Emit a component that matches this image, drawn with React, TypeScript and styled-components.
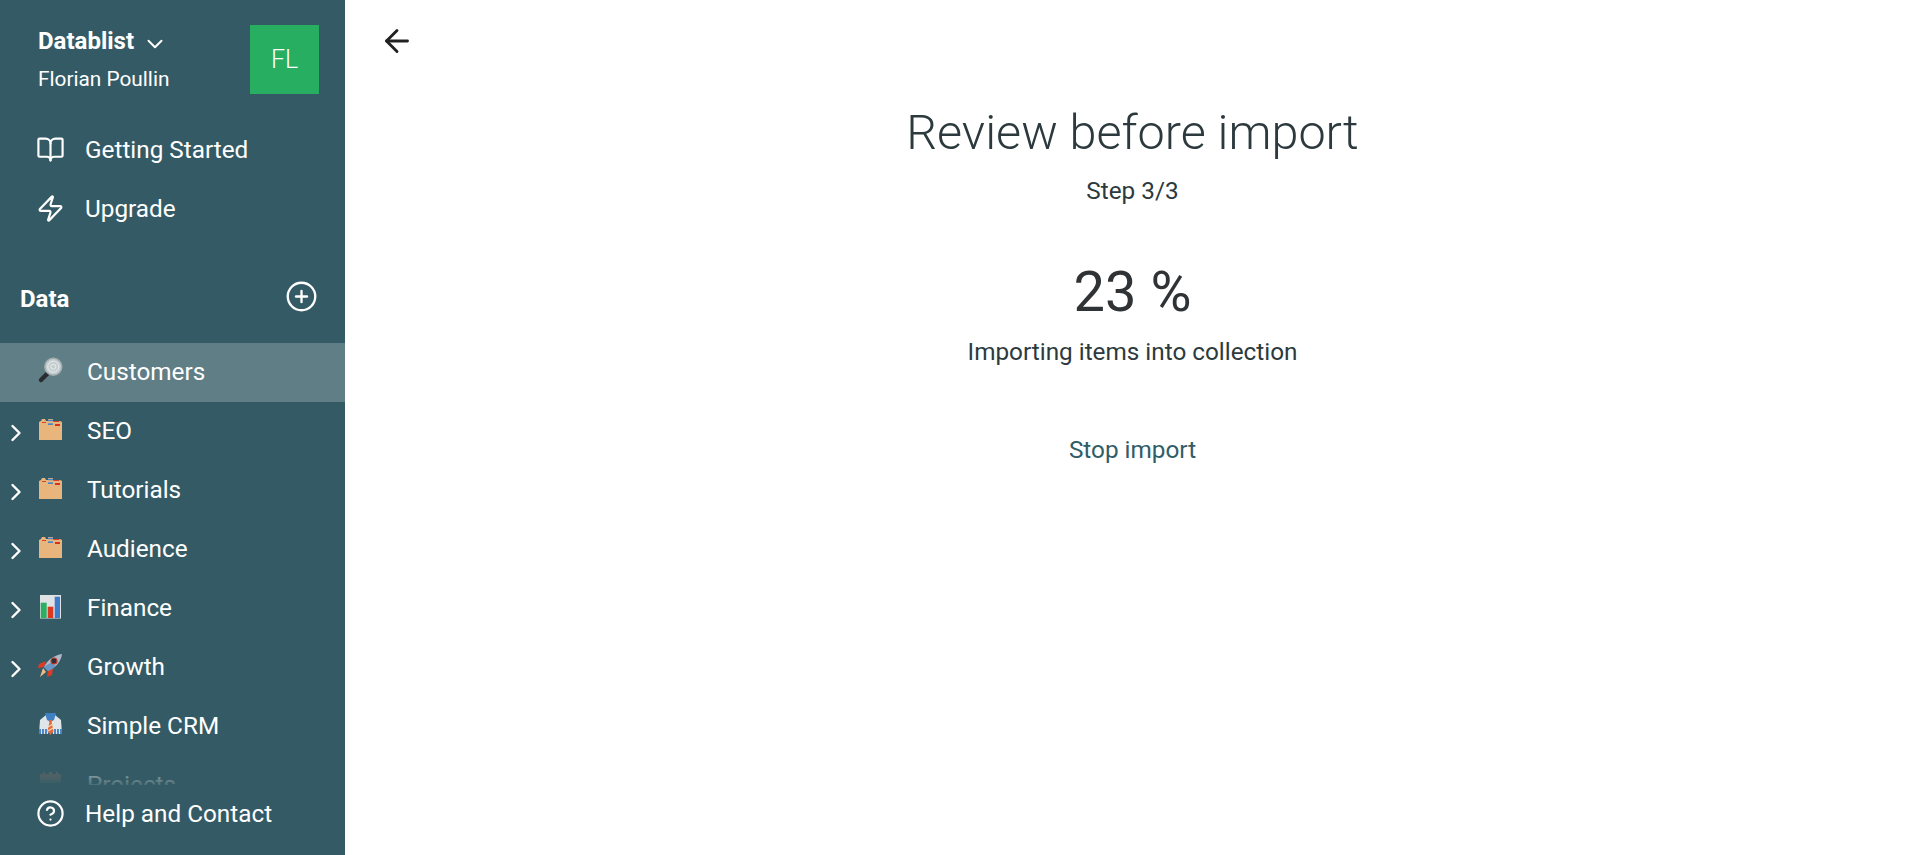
import React from "react";
import styled, { createGlobalStyle } from "styled-components";
import { ArrowLeft, BookOpen, ChevronDown, ChevronRight, CircleHelp, CirclePlus, Zap } from "lucide-react";

const GlobalStyle = createGlobalStyle`
  html, body {
    margin: 0;
    padding: 0;
    background: #fff;
    font-family: Roboto, "Liberation Sans", sans-serif;
  }
  * {
    box-sizing: border-box;
  }
`;

const Page = styled.div`
  display: flex;
  width: 100%;
  height: 855px;
  overflow: hidden;
`;

const Sidebar = styled.aside`
  display: flex;
  flex-direction: column;
  flex: 0 0 345px;
  height: 100%;
  background: #345b65;
  color: #fff;
`;

const Header = styled.div`
  display: flex;
  justify-content: space-between;
  padding: 25px 26px 0 38px;
  height: 120px;
`;

const Account = styled.div`
  display: flex;
  flex-direction: column;
  margin-top: -1px;
`;

const AccountName = styled.div`
  display: flex;
  align-items: center;
  gap: 8px;
  font-size: 24px;
  font-weight: 700;
  line-height: 32px;
`;

const AccountCaret = styled(ChevronDown)`
  margin-top: 7px;
`;

const UserName = styled.div`
  margin-top: 8px;
  font-size: 20.8px;
  font-weight: 400;
  line-height: 28px;
`;

const Avatar = styled.div`
  display: flex;
  align-items: center;
  justify-content: center;
  width: 69px;
  height: 69px;
  background: #27ae60;
  font-size: 25px;
  font-weight: 300;
`;

const NavRow = styled.div`
  display: flex;
  align-items: center;
  gap: 20px;
  height: 59px;
  padding-left: 36px;
  font-size: 24.3px;
`;

const SectionHead = styled.div`
  display: flex;
  align-items: center;
  justify-content: space-between;
  height: 59px;
  margin-top: 30px;
  padding: 2px 27px 0 20px;
  font-size: 24px;
  font-weight: 700;
`;

const AddIcon = styled(CirclePlus)`
  margin-top: -4px;
`;

const List = styled.div`
  position: relative;
  flex: 1;
  min-height: 0;
  margin-top: 16px;
  overflow: hidden;

  &::after {
    content: "";
    position: absolute;
    left: 0;
    right: 0;
    bottom: 0;
    height: 34px;
    background: linear-gradient(rgba(52, 91, 101, 0), rgba(52, 91, 101, 0.88));
  }
`;

const ListRow = styled.div<{ $active?: boolean }>`
  display: flex;
  align-items: center;
  height: 59px;
  padding-bottom: 2px;
  font-size: 24.3px;
  background: ${(p) => (p.$active ? "#5f7e86" : "transparent")};
`;

const Caret = styled.div`
  display: flex;
  justify-content: center;
  flex: 0 0 37px;
  padding: 5px 5px 0 0;
`;

const Emoji = styled.svg`
  flex: 0 0 27px;
  width: 27px;
  height: 27px;
  margin: 2px 23px 0 0;
  overflow: visible;
`;

const Footer = styled.div`
  display: flex;
  flex-direction: column;
  justify-content: center;
  height: 70px;
  padding-bottom: 13px;
`;

const Main = styled.main`
  display: flex;
  flex-direction: column;
  flex: 1;
  min-width: 0;
  color: #2c3a3e;
`;

const TopBar = styled.div`
  display: flex;
  align-items: center;
  height: 81px;
  padding-left: 34px;
  color: #222;
`;

const Content = styled.div`
  display: flex;
  flex-direction: column;
  align-items: center;
  text-align: center;
`;

const Title = styled.h1`
  margin: 24px 0 0;
  font-size: 48.5px;
  font-weight: 300;
  line-height: 56px;
`;

const Step = styled.div`
  margin-top: 16px;
  font-size: 24.3px;
  line-height: 28px;
`;

const Percent = styled.div`
  margin-top: 55px;
  font-size: 56px;
  line-height: 64px;
  color: #2f3335;
`;

const Status = styled.div`
  margin-top: 12px;
  font-size: 24.3px;
  line-height: 32px;
`;

const StopButton = styled.button`
  margin-top: 66px;
  padding: 0;
  border: 0;
  background: none;
  color: #2f5d68;
  font-family: inherit;
  font-size: 24.3px;
  line-height: 32px;
`;

function FolderIcon() {
  return (
    <Emoji viewBox="0 0 27 27">
      <path d="M2 22V4l2-1 1-2h3l1 2h2V1h5v2h7l2 1v18z" fill="#e8b57c" />
      <rect x="5" y="4" width="4" height="1" fill="#d8432c" />
      <rect x="11" y="1.700" width="5" height="1.500" fill="#4d86c6" />
      <rect x="11" y="5.300" width="5" height="1.700" fill="#4d86c6" />
      <rect x="16.300" y="3" width="6" height="1" fill="#d8432c" />
      <rect x="18" y="6" width="5" height="2" fill="#d8321c" />
    </Emoji>
  );
}

function LensIcon() {
  return (
    <Emoji viewBox="0 0 27 27">
      <path d="M4 21l7-7" stroke="#2a2d30" strokeWidth="4.500" strokeLinecap="round" />
      <circle cx="16.300" cy="7.700" r="8.500" fill="#c4ced0" stroke="#a3abad" strokeWidth="1.500" />
      <circle cx="16.300" cy="7.700" r="5.500" fill="none" stroke="#e8ecec" strokeWidth="1" />
      <circle cx="16.300" cy="7.700" r="2.500" fill="none" stroke="#e8ecec" strokeWidth="1" />
    </Emoji>
  );
}

function ChartIcon() {
  return (
    <Emoji viewBox="0 0 27 27">
      <rect x="3" y="0" width="21" height="23.500" fill="#dfe3e5" />
      <rect x="3.700" y="7.700" width="6" height="15.300" fill="#2eae62" />
      <rect x="10.700" y="11.700" width="5.600" height="11.300" fill="#d8391f" />
      <rect x="17.700" y="1.700" width="5.300" height="21.300" fill="#3d7cc9" />
    </Emoji>
  );
}

function RocketIcon() {
  return (
    <Emoji viewBox="0 0 27 27">
      <path d="M9 7L2 10l-1 4 6-1z" fill="#df3b24" />
      <path d="M16 14l-5 3-1 6 5-2z" fill="#df3b24" />
      <path d="M25 0C18 1 10 6 7 13l4 4c7-3 13-9 14-17z" fill="#aebbc6" />
      <path d="M7 13l4 4c3-1 6-3 8-5l-5-3c-3 1-5 2-7 4z" fill="#4d86c6" opacity="0.7" />
      <circle cx="17" cy="7" r="3" fill="#2c2f33" stroke="#c0392b" strokeWidth="1.200" />
      <path d="M6 14l3 4-6 5z" fill="#eeb98a" />
    </Emoji>
  );
}

function CrmIcon() {
  return (
    <Emoji viewBox="0 0 27 27">
      <path d="M9 2L3 7 2 21h9l2-12z" fill="#dfe5e8" />
      <path d="M18 2l6 5 1 14h-9l-2-12z" fill="#dfe5e8" />
      <path d="M3 21v-5M6 21v-5M9 21v-5M18 21v-5M21 21v-5M24 21v-5" stroke="#4d86c6" strokeWidth="2" />
      <path d="M8 0h11l-2 7-3.500 2L10 7z" fill="#3f7fc4" />
      <path d="M11.500 7h4l-1 2 2 9-3 4-3-4 2-9z" fill="#e5683c" />
      <path d="M11 14l5-3M11 18l5-3" stroke="#f3d9a8" strokeWidth="1.200" />
    </Emoji>
  );
}

function ProjectsIcon() {
  return (
    <Emoji viewBox="0 0 27 27">
      <path d="M3 2h3V0h2v2h4V0h3v2h4V0h2v2h3v7H3z" fill="#7b6a66" />
      <rect x="3" y="8" width="21" height="3" fill="#5d6f73" />
    </Emoji>
  );
}

const rows = [
  { name: "Customers", icon: <LensIcon />, active: true },
  { name: "SEO", icon: <FolderIcon />, caret: true },
  { name: "Tutorials", icon: <FolderIcon />, caret: true },
  { name: "Audience", icon: <FolderIcon />, caret: true },
  { name: "Finance", icon: <ChartIcon />, caret: true },
  { name: "Growth", icon: <RocketIcon />, caret: true },
  { name: "Simple CRM", icon: <CrmIcon /> },
  { name: "Projects", icon: <ProjectsIcon /> },
];

export default function App() {
  return (
    <Page>
      <GlobalStyle />
      <Sidebar>
        <Header>
          <Account>
            <AccountName>
              Datablist <AccountCaret size={26} strokeWidth={1.8} />
            </AccountName>
            <UserName>Florian Poullin</UserName>
          </Account>
          <Avatar>FL</Avatar>
        </Header>
        <NavRow>
          <BookOpen size={29} strokeWidth={1.8} />
          Getting Started
        </NavRow>
        <NavRow>
          <Zap size={29} strokeWidth={1.8} />
          Upgrade
        </NavRow>
        <SectionHead>
          Data
          <AddIcon size={33} strokeWidth={1.7} />
        </SectionHead>
        <List>
          {rows.map((row) => (
            <ListRow key={row.name} $active={row.active}>
              <Caret>{row.caret && <ChevronRight size={28} strokeWidth={2.1} />}</Caret>
              {row.icon}
              {row.name}
            </ListRow>
          ))}
        </List>
        <Footer>
          <NavRow>
            <CircleHelp size={29} strokeWidth={1.8} />
            Help and Contact
          </NavRow>
        </Footer>
      </Sidebar>
      <Main>
        <TopBar>
          <ArrowLeft size={36} strokeWidth={1.9} />
        </TopBar>
        <Content>
          <Title>Review before import</Title>
          <Step>Step 3/3</Step>
          <Percent>23 %</Percent>
          <Status>Importing items into collection</Status>
          <StopButton>Stop import</StopButton>
        </Content>
      </Main>
    </Page>
  );
}
